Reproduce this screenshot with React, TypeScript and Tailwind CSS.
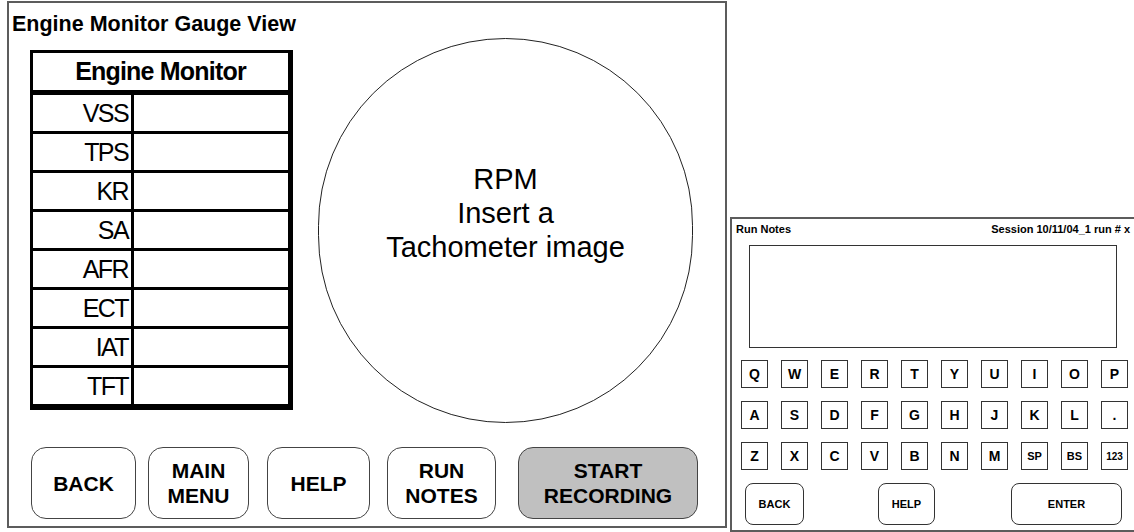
import React from 'react';

const labels = ['VSS', 'TPS', 'KR', 'SA', 'AFR', 'ECT', 'IAT', 'TFT'];

const keyRows = [
    ['Q', 'W', 'E', 'R', 'T', 'Y', 'U', 'I', 'O', 'P'],
    ['A', 'S', 'D', 'F', 'G', 'H', 'J', 'K', 'L', '.'],
    ['Z', 'X', 'C', 'V', 'B', 'N', 'M', 'SP', 'BS', '123'],
];

const App = () => {
    return (
        <div className="w-[1134px] h-[532px] overflow-hidden bg-white text-black flex items-start font-['Liberation_Sans',Arial,sans-serif]">
            {/* Gauge view panel */}
            <div className="ml-[7px] mt-[1px] w-[720px] h-[527px] shrink-0 border-2 border-[#5c5c5c] flex flex-col">
                <div className="h-[35px] pl-[3px] pt-[9px] text-[21.5px] leading-[24px] font-bold">
                    Engine Monitor Gauge View
                </div>

                <div className="flex items-start">
                    {/* Engine monitor table */}
                    <div className="ml-[21px] mt-[12px] w-[263px] border-t-[3px] border-l-[3px] border-r-[5px] border-b-[6px] border-black">
                        <div className="h-[37px] border-b-[5px] border-black box-content flex items-center justify-center text-[25px] font-bold tracking-[-0.8px]">
                            Engine Monitor
                        </div>
                        {labels.map((label, i) => (
                            <div
                                key={label}
                                className={`flex h-[36px] box-content ${i < labels.length - 1 ? 'border-b-[3px] border-black' : ''}`}
                            >
                                <div className="w-[95px] border-r-[3px] border-black box-content flex items-center justify-end pr-[3px] pt-[2px] text-[25px] tracking-[-1.6px]">
                                    {label}
                                </div>
                                <div className="flex-1" />
                            </div>
                        ))}
                    </div>

                    {/* Tachometer placeholder */}
                    <div className="ml-[25px] w-[375px] h-[385px] rounded-full border-[1.5px] border-[#222] flex flex-col items-center justify-center text-[29px] leading-[34px] pb-[36px]">
                        <span>RPM</span>
                        <span>Insert a</span>
                        <span>Tachometer image</span>
                    </div>
                </div>

                {/* Bottom buttons */}
                <div className="mt-[24px] ml-[22px] flex items-start text-[21px] leading-[25px] font-bold">
                    <button className="w-[105px] h-[72px] rounded-[15px] border-[1.5px] border-[#444] bg-white">
                        BACK
                    </button>
                    <button className="ml-[12px] w-[101px] h-[72px] rounded-[15px] border-[1.5px] border-[#444] bg-white">
                        MAIN<br />MENU
                    </button>
                    <button className="ml-[18px] w-[103px] h-[72px] rounded-[15px] border-[1.5px] border-[#444] bg-white">
                        HELP
                    </button>
                    <button className="ml-[17px] w-[109px] h-[72px] rounded-[15px] border-[1.5px] border-[#444] bg-white">
                        RUN<br />NOTES
                    </button>
                    <button className="ml-[22px] w-[180px] h-[72px] rounded-[15px] border-[1.5px] border-[#444] bg-[#c0c0c0]">
                        START<br />RECORDING
                    </button>
                </div>
            </div>

            {/* Run notes panel */}
            <div className="ml-[3px] mt-[217px] w-[412px] h-[315px] shrink-0 border-2 border-[#5c5c5c] flex flex-col">
                <div className="h-[20px] pl-[4px] pr-[10px] flex items-center justify-between text-[11px] font-bold">
                    <span>Run Notes</span>
                    <span>Session 10/11/04_1 run # x</span>
                </div>

                <div className="mt-[6px] ml-[17px] w-[368px] h-[103px] border-[1.5px] border-[#333]" />

                <div className="mt-[12px] ml-[9px] flex flex-col gap-[13px]">
                    {keyRows.map((row, r) => (
                        <div key={r} className="flex gap-[13px]">
                            {row.map((k) => (
                                <div
                                    key={k}
                                    className={`w-[27px] h-[28px] border border-[#333] flex items-center justify-center font-bold ${k === '123' ? 'text-[10px]' : k.length > 1 ? 'text-[11px]' : 'text-[14px]'}`}
                                >
                                    {k}
                                </div>
                            ))}
                        </div>
                    ))}
                </div>

                <div className="mt-[13px] ml-[13px] flex items-start text-[11px] font-bold">
                    <button className="w-[59px] h-[42px] rounded-[8px] border border-[#333] bg-white">BACK</button>
                    <button className="ml-[74px] w-[57px] h-[42px] rounded-[8px] border border-[#333] bg-white">HELP</button>
                    <button className="ml-[76px] w-[111px] h-[42px] rounded-[8px] border border-[#333] bg-white">ENTER</button>
                </div>
            </div>
        </div>
    );
};

export default App;
